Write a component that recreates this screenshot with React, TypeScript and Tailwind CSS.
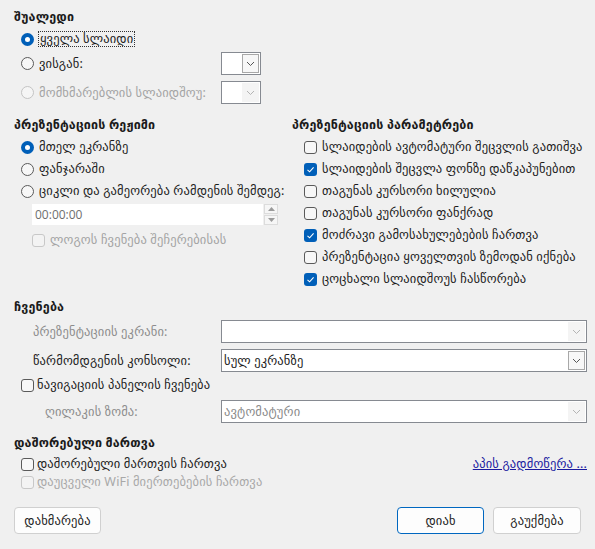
import React from "react";

const FONT = { fontFamily: '"Noto Sans", "DejaVu Sans", sans-serif' };

function Radio({ checked, disabled }: { checked?: boolean; disabled?: boolean }) {
	if (checked) {
		return (
			<span className="w-[13px] h-[13px] rounded-full bg-[#005fb8] flex items-center justify-center flex-none">
				<span className="w-[5px] h-[5px] rounded-full bg-white" />
			</span>
		);
	}
	return (
		<span
			className={`w-[13px] h-[13px] rounded-full border flex-none ${
				disabled ? "border-[#c4c4c4] bg-[#f5f5f5]" : "border-[#5a5a5a] bg-[#f7f7f7]"
			}`}
		/>
	);
}

function Check({ checked, disabled }: { checked?: boolean; disabled?: boolean }) {
	if (checked) {
		return (
			<span className="w-[13px] h-[13px] rounded-[3px] bg-[#005fb8] flex items-center justify-center flex-none">
				<svg width="9" height="9" viewBox="0 0 9 9" fill="none">
					<path d="M1.5 4.8 L3.6 6.8 L7.6 2.3" stroke="white" strokeWidth="1.1" />
				</svg>
			</span>
		);
	}
	return (
		<span
			className={`w-[13px] h-[13px] rounded-[3px] border flex-none ${
				disabled ? "border-[#c8c8c8] bg-[#f3f3f3]" : "border-[#5a5a5a] bg-[#f7f7f7]"
			}`}
		/>
	);
}

function Chevron({ dark }: { dark?: boolean }) {
	return (
		<svg width="9" height="6" viewBox="0 0 9 6" fill="none">
			<path d="M1 1 L4.5 4.5 L8 1" stroke={dark ? "#555" : "#b4b4b4"} strokeWidth="1" />
		</svg>
	);
}

function Combo({
	value,
	active,
	muted,
	className,
}: {
	value?: string;
	active?: boolean;
	muted?: boolean;
	className: string;
}) {
	return (
		<div className={`flex border border-[#868a91] bg-white h-[23px] flex-none ${className}`}>
			<div
				className={`flex-1 flex items-center pl-[2px] overflow-hidden whitespace-nowrap ${
					muted ? "text-[#8a8a8a]" : "text-[#1b1b1b]"
				}`}
			>
				{value}
			</div>
			<div
				className={`w-[17px] my-[1px] mr-[1px] flex items-center justify-center ${
					active ? "border border-[#a8a8a8] bg-[#f7f7f7]" : "bg-[#f4f4f4]"
				}`}
			>
				<Chevron dark={active} />
			</div>
		</div>
	);
}

export default function App() {
	return (
		<div
			className="w-[595px] h-[549px] bg-[#f0f0f0] text-[#1b1b1b] text-[12.5px] tracking-[0.15px] leading-[16px] flex flex-col pl-[14px] pt-[8px] overflow-hidden"
			style={FONT}
		>
			{/* შუალედი */}
			<div className="h-[18px] flex items-center font-bold">შუალედი</div>
			<div className="pl-[7px] flex flex-col">
				<div className="h-[22px] mt-[2px] flex items-center gap-[4px]">
					<Radio checked />
					<span className="border border-dotted border-[#333] px-[1px] leading-[14px]">ყველა სლაიდი</span>
				</div>
				<div className="h-[23px] mt-[2px] flex items-center">
					<div className="w-[200px] flex items-center gap-[5px]">
						<Radio />
						<span>ვისგან:</span>
					</div>
					<Combo className="w-[40px]" active />
				</div>
				<div className="h-[23px] mt-[6px] flex items-center">
					<div className="w-[200px] flex items-center gap-[5px] text-[#a3a3a3] whitespace-nowrap">
						<Radio disabled />
						<span>მომხმარებლის სლაიდშოუ:</span>
					</div>
					<Combo className="w-[40px]" />
				</div>
			</div>

			{/* რეჟიმი / პარამეტრები */}
			<div className="flex mt-[12px]">
				<div className="w-[278px] flex flex-col">
					<div className="h-[18px] flex items-center font-bold">პრეზენტაციის რეჟიმი</div>
					<div className="pl-[7px] mt-[2px] flex flex-col">
						<div className="h-[22px] flex items-center gap-[5px]">
							<Radio checked />
							<span>მთელ ეკრანზე</span>
						</div>
						<div className="h-[22px] flex items-center gap-[5px]">
							<Radio />
							<span>ფანჯარაში</span>
						</div>
						<div className="h-[22px] flex items-center gap-[5px] whitespace-nowrap">
							<Radio />
							<span>ციკლი და გამეორება რამდენის შემდეგ:</span>
						</div>
					</div>
					<div className="ml-[18px] mt-[2px] h-[21px] flex">
						<div
							className="w-[231px] bg-white flex items-center pl-[3px] text-[#6e6e6e] text-[12px] tracking-normal"
							style={{ fontFamily: '"Open Sans", "Noto Sans", sans-serif' }}
						>
							00:00:00
						</div>
						<div className="w-[14px] ml-[1px] flex flex-col gap-[1px]">
							<div className="flex-1 bg-[#f6f6f6] border border-[#dcdcdc] flex items-center justify-center">
								<svg width="7" height="4" viewBox="0 0 7 4">
									<path d="M0 4 L3.5 0 L7 4 Z" fill="#9a9a9a" />
								</svg>
							</div>
							<div className="flex-1 bg-[#f6f6f6] border border-[#dcdcdc] flex items-center justify-center">
								<svg width="7" height="4" viewBox="0 0 7 4">
									<path d="M0 0 L3.5 4 L7 0 Z" fill="#9a9a9a" />
								</svg>
							</div>
						</div>
					</div>
					<div className="ml-[18px] mt-[4px] h-[22px] flex items-center gap-[5px] text-[#a3a3a3]">
						<Check disabled />
						<span>ლოგოს ჩვენება შეჩერებისას</span>
					</div>
				</div>

				<div className="flex-1 flex flex-col">
					<div className="h-[18px] flex items-center font-bold whitespace-nowrap">პრეზენტაციის პარამეტრები</div>
					<div className="pl-[12px] mt-[2px] flex flex-col">
						{[
							["სლაიდების ავტომატური შეცვლის გათიშვა", false],
							["სლაიდების შეცვლა ფონზე დაწკაპუნებით", true],
							["თაგუნას კურსორი ხილულია", false],
							["თაგუნას კურსორი ფანქრად", false],
							["მოძრავი გამოსახულებების ჩართვა", true],
							["პრეზენტაცია ყოველთვის ზემოდან იქნება", false],
							["ცოცხალი სლაიდშოუს ჩასწორება", true],
						].map(([label, on]) => (
							<div key={label as string} className="h-[22px] flex items-center gap-[5px] whitespace-nowrap">
								<Check checked={on as boolean} />
								<span>{label as string}</span>
							</div>
						))}
					</div>
				</div>
			</div>

			{/* ჩვენება */}
			<div className="h-[18px] mt-[8px] flex items-center font-bold">ჩვენება</div>
			<div className="h-[23px] mt-[4px] flex items-center">
				<span className="w-[207px] pl-[19px] text-[#8c8c8c] whitespace-nowrap">პრეზენტაციის ეკრანი:</span>
				<Combo className="w-[366px]" />
			</div>
			<div className="h-[23px] mt-[6px] flex items-center">
				<span className="w-[207px] pl-[19px] whitespace-nowrap">წარმომდგენის კონსოლი:</span>
				<Combo className="w-[366px]" value="სულ ეკრანზე" active />
			</div>
			<div className="h-[22px] mt-[2px] pl-[7px] flex items-center gap-[3px]">
				<Check />
				<span>ნავიგაციის პანელის ჩვენება</span>
			</div>
			<div className="h-[23px] mt-[4px] flex items-center">
				<span className="w-[207px] pl-[31px] text-[#8c8c8c]">ღილაკის ზომა:</span>
				<Combo className="w-[366px]" value="ავტომატური" muted />
			</div>

			{/* დაშორებული მართვა */}
			<div className="h-[18px] mt-[11px] flex items-center font-bold">დაშორებული მართვა</div>
			<div className="h-[18px] mt-[3px] pl-[7px] pr-[8px] flex items-center">
				<div className="flex items-center gap-[3px]">
					<Check />
					<span>დაშორებული მართვის ჩართვა</span>
				</div>
				<a href="#" className="ml-auto text-[#1a1aa0] underline">
					აპის გადმოწერა ...
				</a>
			</div>
			<div className="h-[18px] pl-[7px] flex items-center gap-[3px] text-[#a8a8a8]">
				<Check disabled />
				<span>დაუცველი WiFi მიერთებების ჩართვა</span>
			</div>

			{/* ღილაკები */}
			<div className="mt-[16px] pr-[14px] flex items-center">
				<button
					type="button"
					className="w-[87px] h-[27px] bg-[#fdfdfd] border border-[#d0d0d0] rounded-[4px] flex items-center justify-center"
				>
					დახმარება
				</button>
				<button
					type="button"
					className="ml-auto w-[87px] h-[27px] bg-[#fdfdfd] border border-[#0067c0] rounded-[4px] flex items-center justify-center"
				>
					დიახ
				</button>
				<button
					type="button"
					className="ml-[9px] w-[88px] h-[27px] bg-[#fdfdfd] border border-[#d0d0d0] rounded-[4px] flex items-center justify-center"
				>
					გაუქმება
				</button>
			</div>
		</div>
	);
}
